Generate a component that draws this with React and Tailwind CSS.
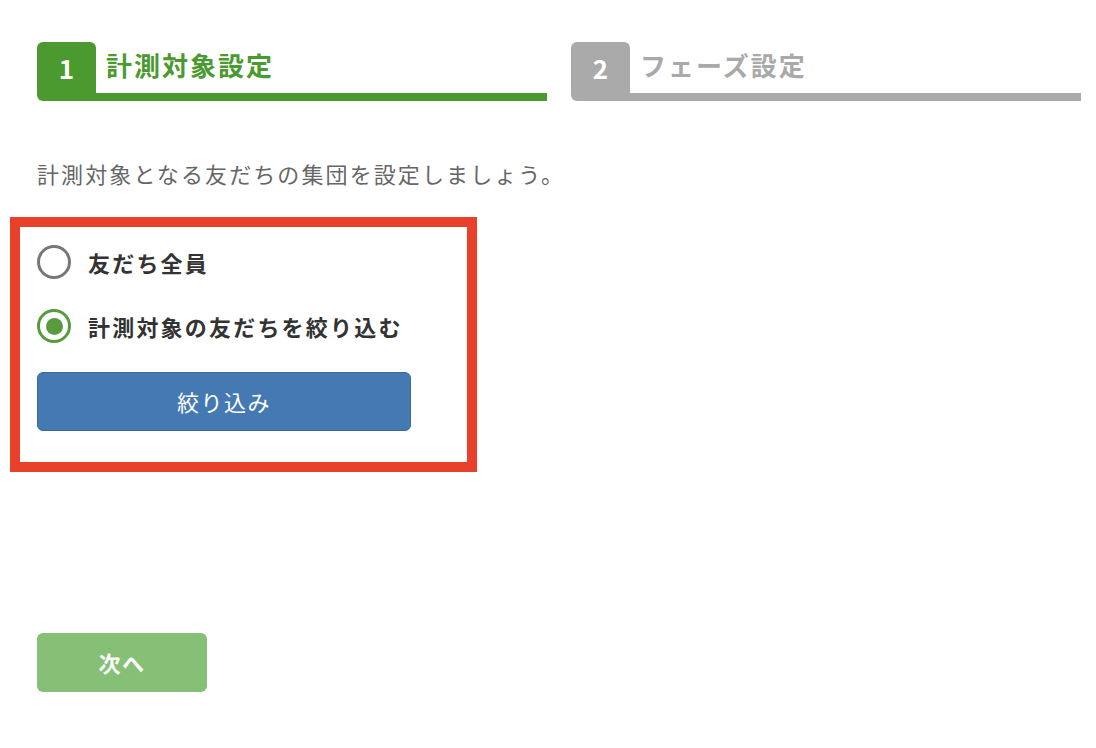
const font = { fontFamily: '"Noto Sans CJK JP", "Noto Sans", sans-serif' };

function StepTab({ num, label, active }) {
  return (
    <div className="flex flex-1 items-stretch h-[59px]">
      <div
        className={`w-[59px] shrink-0 flex items-center justify-center pb-[9px] rounded-t-[6px] rounded-bl-[6px] text-white font-bold text-[26px] ${
          active ? "bg-[#4a9a2f]" : "bg-[#aaaaaa]"
        }`}
      >
        {num}
      </div>
      <div
        className={`flex-1 flex items-center pl-[10px] pb-[6px] border-b-[8px] font-bold text-[26px] tracking-[2px] ${
          active ? "border-[#4a9a2f] text-[#4a9a2f]" : "border-[#aaaaaa] text-[#a9a9a9]"
        }`}
      >
        {label}
      </div>
    </div>
  );
}

function Radio({ checked, label }) {
  return (
    <label className="flex items-center gap-[17px] cursor-pointer">
      <span
        className={`w-[34px] h-[34px] rounded-full border-[3px] flex items-center justify-center ${
          checked ? "border-[#5a9a3f]" : "border-[#777777]"
        }`}
      >
        {checked && <span className="w-[17px] h-[17px] rounded-full bg-[#5a9a3f]" />}
      </span>
      <span className="text-[22px] font-bold tracking-[2.2px] text-[#333333]">{label}</span>
    </label>
  );
}

export default function App() {
  return (
    <div className="min-h-[748px] bg-white pl-[37px] pr-[15px] pt-[42px]" style={font}>
      <div className="flex gap-[24px]">
        <StepTab num="1" label="計測対象設定" active />
        <StepTab num="2" label="フェーズ設定" />
      </div>

      <p className="mt-[56px] text-[22px] leading-[32px] tracking-[2.1px] text-[#666666]">
        計測対象となる友だちの集団を設定しましょう。
      </p>

      <div className="mt-[28px] ml-[-27px] w-[467px] border-[10px] border-[#e8402b] pl-[17px] pt-[18px] pb-[31px]">
        <div className="flex flex-col gap-[30px]">
          <Radio label="友だち全員" />
          <Radio label="計測対象の友だちを絞り込む" checked />
        </div>
        <button className="mt-[29px] w-[374px] h-[59px] rounded-[6px] bg-[#4579b2] border border-[#3b6aa0] text-white text-[22px] tracking-[1.5px]">
          絞り込み
        </button>
      </div>

      <button className="mt-[161px] w-[170px] h-[59px] rounded-[6px] bg-[#86bf76] text-white font-bold text-[22px] tracking-[1.5px]">
        次へ
      </button>
    </div>
  );
}
